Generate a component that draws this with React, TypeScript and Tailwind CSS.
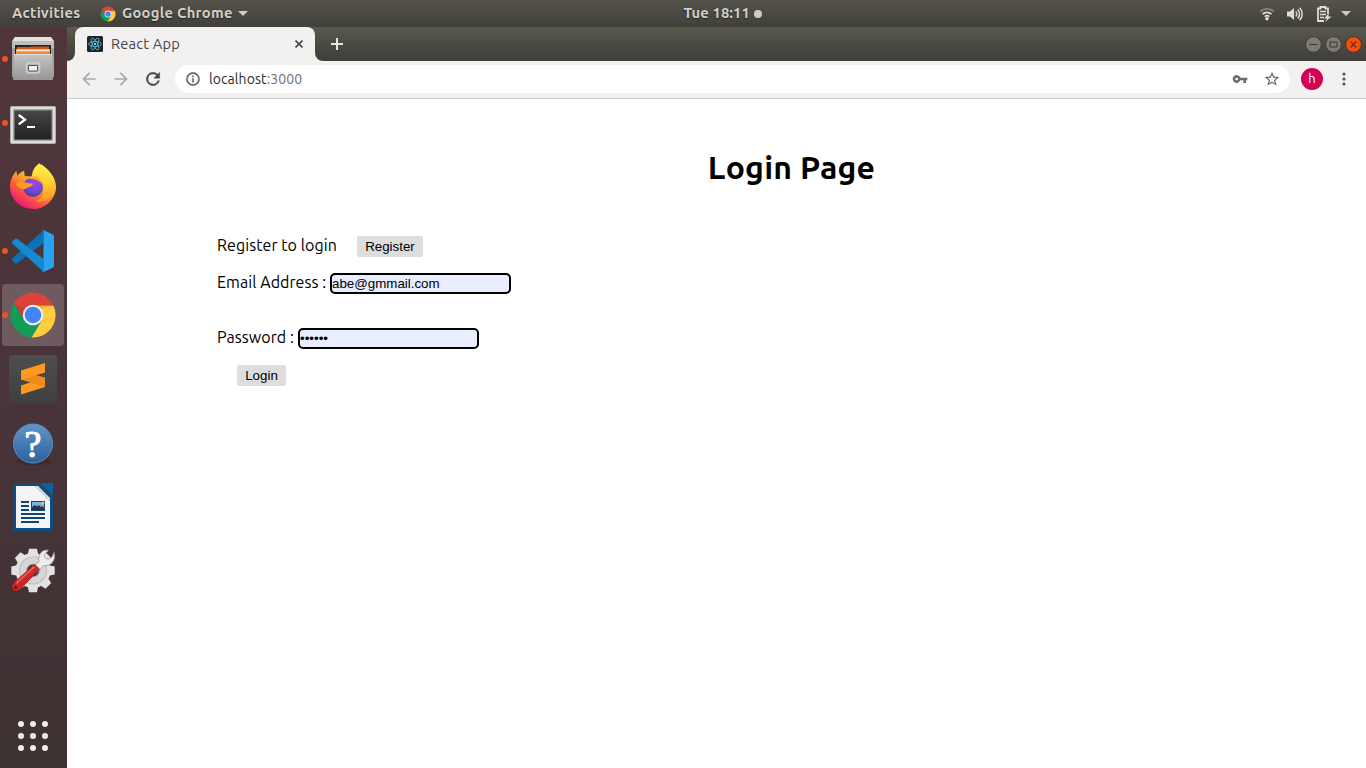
import type { ReactNode } from "react";

function ChromeLogo({ className }: { className: string }) {
  return (
    <svg viewBox="0 0 48 48" className={className}>
      <path d="M24 24 4.5 12.8A22.5 22.5 0 0 0 22.7 46.5L33.4 28Z" fill="#0f9d58" />
      <path d="M24 14.5H44.4A22.5 22.5 0 0 1 22.7 46.5L33 29Z" fill="#ffcd40" />
      <path d="M4.9 12.1A22.5 22.5 0 0 1 44.4 14.5H24L15 28Z" fill="#db4437" />
      <path d="M4.9 12.1 15 29 17 19Z" fill="#a8352a" opacity=".35" />
      <path d="M24 14H44.4L31 18.5Z" fill="#bf9b1a" opacity=".35" />
      <circle cx="24" cy="24" r="10.3" fill="#f1f1f1" />
      <circle cx="24" cy="24" r="8.3" fill="#4285f4" />
    </svg>
  );
}

function FilesIcon() {
  return (
    <svg viewBox="0 0 48 48" className="size-12">
      <defs>
        <linearGradient id="filesBody" x1="0" y1="0" x2="0" y2="1">
          <stop offset="0" stopColor="#c4c4c4" />
          <stop offset="1" stopColor="#969696" />
        </linearGradient>
      </defs>
      <path d="M6 2H42L45 6V42H3V6Z" fill="#a0a0a0" />
      <path d="M6 2H42L45 6.5H3Z" fill="#e2e2e2" />
      <path d="M3 6.5H45V13H3Z" fill="#bdbdbd" />
      <rect x="6" y="10" width="36" height="11" fill="#242424" />
      <path d="M8 12H21L22 11.5H40V20H8Z" fill="#d3561c" />
      <path d="M7 14H41V20H7Z" fill="#f3ad63" />
      <path d="M8 15.3H40" stroke="#fff0dc" strokeWidth="1" />
      <path d="M7 17H41V20H7Z" fill="#e88b3c" />
      <path d="M5 19H43L44 45H4Z" fill="url(#filesBody)" />
      <path d="M5 19.5H43" stroke="#e0e0e0" />
      <rect x="17.5" y="28" width="13" height="10" rx="2" fill="#b4b4b4" stroke="#cfcfcf" strokeWidth="1.500" />
      <rect x="19.5" y="30.5" width="9" height="5.500" rx=".5" fill="#f0f0f0" stroke="#555" />
    </svg>
  );
}

function TerminalIcon() {
  return (
    <svg viewBox="0 0 48 48" className="size-12">
      <defs>
        <linearGradient id="termScreen" x1="0" y1="0" x2="0" y2="1">
          <stop offset="0" stopColor="#484848" />
          <stop offset=".5" stopColor="#343434" />
          <stop offset="1" stopColor="#212121" />
        </linearGradient>
      </defs>
      <rect x="1.5" y="7.5" width="45" height="37" rx="1" fill="#dcdcdc" stroke="#b0b0b0" />
      <rect x="5" y="11" width="38" height="30" fill="url(#termScreen)" stroke="#858585" strokeWidth="1.200" />
      <path d="m9.700 16 6.300 4.700-6.300 4.700" fill="none" stroke="#fff" strokeWidth="2.300" />
      <path d="M18 28h8" stroke="#fff" strokeWidth="2" />
    </svg>
  );
}

function FirefoxIcon() {
  return (
    <svg viewBox="0 0 48 48" className="size-12">
      <defs>
        <linearGradient id="foxBody" x1=".85" y1=".1" x2=".3" y2=".95">
          <stop offset="0" stopColor="#fff44f" />
          <stop offset=".35" stopColor="#ffbd2d" />
          <stop offset=".68" stopColor="#ff6138" />
          <stop offset="1" stopColor="#f01c72" />
        </linearGradient>
        <linearGradient id="foxTail" x1=".4" y1="0" x2=".5" y2="1">
          <stop offset="0" stopColor="#fff04a" />
          <stop offset=".5" stopColor="#ffd232" />
          <stop offset="1" stopColor="#ff9228" />
        </linearGradient>
        <radialGradient id="foxGlobe" cx=".6" cy=".25" r=".8">
          <stop offset="0" stopColor="#a545ed" />
          <stop offset=".55" stopColor="#7249d6" />
          <stop offset="1" stopColor="#463bb0" />
        </radialGradient>
      </defs>
      <path d="M5.800 10c.6-1.200 1.500-2.200 1.500-2.200l1.200 5.100c1.100-1.800 3.300-4.100 6.600-5.200l.6 5.400 6.300.4 9.900-12.500c7.200 5.200 15.100 12.200 15.100 23.400A22.800 22.800 0 0 1 24 46 22.800 22.800 0 0 1 1 25c-.2-6.500 2-11.700 4.800-15Z" fill="url(#foxBody)" />
      <path d="M30.500 0c-5 3.500-7.500 8.500-7.500 13.500 3.500.2 9 2.500 11 7.500 2.800 7 0 14.500-7.500 17.500 8 1.500 17-3 20-11.500.5-4-.3-8.500-3-12l-.8-.4c-.6-3.500-2-4.200-2.700-4.600l-.3 2C36.500 8 31.500 6 30.500 0Z" fill="url(#foxTail)" />
      <circle cx="24" cy="24" r="10" fill="url(#foxGlobe)" />
      <path d="M6.800 20.800c3-2.500 7-2.300 10-1.300 2.200.8 4.800 1 7.200 1.200 0 2.500-4.500 3.200-6.200 4.300-1.300 1-1.800 1.500-3.300 1.300C11.500 26 8 23.500 6.800 20.800Z" fill="#ff9a23" />
      <path d="M18.500 15.500c3-2 7-2.800 11-1.500l-2.500.5c5 1.500 7.500 5 7.500 9-1-2.500-2.500-4-4.500-5-3-2.300-7-3-11.500-3Z" fill="#ffab2e" />
    </svg>
  );
}

function CodeIcon() {
  return (
    <svg viewBox="0 0 48 48" className="size-12">
      <path d="M34.500 3.200 3.300 31.500a1.400 1.400 0 0 0 0 2l3 2.700c.5.5 1.200.5 1.800.1L34.500 16Z" fill="#0d72b5" />
      <path d="M34.500 44.800 3.300 16.500a1.400 1.400 0 0 1 0-2l3-2.700c.5-.5 1.200-.5 1.800-.1L34.500 32Z" fill="#148ad0" />
      <path d="m34.500 3 9 4.200c1 .5 1.500 1.400 1.500 2.400v28.800c0 1-.6 2-1.500 2.400l-9 4.200c-.8.300-1.300-.1-1.800-.700.8.700 1.800.2 1.800-.8V4.500c0-1-1-1.500-1.800-.8.500-.6 1-1 1.800-.7Z" fill="#29a3ee" />
    </svg>
  );
}

function SublimeIcon() {
  return (
    <svg viewBox="0 0 48 48" className="size-12">
      <defs>
        <linearGradient id="sublimeTile" x1="0" y1="0" x2="0" y2="1">
          <stop offset="0" stopColor="#4d4d4d" />
          <stop offset="1" stopColor="#404040" />
        </linearGradient>
      </defs>
      <rect width="48" height="48" rx="2.500" fill="url(#sublimeTile)" />
      <path d="M36 22.500V32L12 39.500V30.500Z" fill="#ff9820" />
      <path d="M12 16 36 22.500V32L12 24.500Z" fill="#f28a17" />
      <path d="M36 8v9.500L12 24.800V15.500Z" fill="#ff9820" />
    </svg>
  );
}

function HelpIcon() {
  return (
    <svg viewBox="0 0 48 48" className="size-12">
      <defs>
        <linearGradient id="helpDisc" x1="0" y1="0" x2="0" y2="1">
          <stop offset="0" stopColor="#5f95c9" />
          <stop offset="1" stopColor="#2c629d" />
        </linearGradient>
      </defs>
      <ellipse cx="24" cy="42.500" rx="18" ry="4" fill="#2c2024" opacity=".35" />
      <circle cx="24" cy="24.500" r="19.500" fill="url(#helpDisc)" stroke="#5d8fbe" strokeWidth="1" />
      <text x="24" y="37.500" textAnchor="middle" fill="#fff" stroke="#fff" strokeWidth="1" className="font-['Liberation_Serif',serif] text-[38px]">?</text>
    </svg>
  );
}

function WriterIcon() {
  return (
    <svg viewBox="0 0 48 48" className="size-12">
      <path d="M6 0H30L44 15V46a2 2 0 0 1-2 2H6a2 2 0 0 1-2-2V2a2 2 0 0 1 2-2Z" fill="#0b4f7e" />
      <path d="M31 0H44V13Z" fill="#0a619f" />
      <path d="M7 3H26L41 18V45H7Z" fill="#f4f4f4" />
      <path d="M26 3 41 18V15L29 3Z" fill="#dbe1e6" />
      <path d="M12 19h8M12 23h8M12 27h8M12 31h24M12 35h24M12 39h18" stroke="#0b4771" strokeWidth="2" />
      <rect x="22" y="18" width="14" height="10" fill="#0b4771" />
      <rect x="23" y="19" width="12" height="8" fill="#74b7e6" />
      <circle cx="34" cy="20" r="1.500" fill="#f7c843" />
      <path d="M23 27v-3l3-2 2 1.500 2-1.500 1.500 2 1.500-1 2 2v2Z" fill="#333" />
    </svg>
  );
}

const teeth = [0, 45, 90, 135, 180, 225, 270, 315];

function SettingsIcon() {
  return (
    <svg viewBox="0 0 48 48" className="size-12">
      <g fill="#e2e2e2">
        {teeth.map((angle) => (
          <path key={angle} d="M18.500 9 20 1.800h8L29.500 9Z" transform={`rotate(${angle} 24 23.500)`} />
        ))}
        <circle cx="24" cy="23.500" r="17.500" />
      </g>
      <circle cx="24" cy="23.500" r="13.500" fill="#d6d6d6" stroke="#c0c0c0" strokeWidth="1.200" />
      <circle cx="24" cy="23.500" r="6.500" fill="#4a3a3d" stroke="#b5b5b5" />
      <path d="m23 21.500 7-7C28.500 7 33.500 2 39.500 3.200L35.500 7.500c-.3 2.500.8 4.500 3.500 4.500 2 0 3.500-1 4.500-3L45 5.500c2.500 7.500-3 14-10.500 13.200L27.500 25.500Z" fill="#ececec" stroke="#979797" strokeWidth=".8" />
      <path d="m25.500 17.500 5 4.500L11 42.500c-4 4.300-10.500-.3-7-6Z" fill="#cc2724" stroke="#8e1514" strokeWidth=".8" />
      <path d="M7 36.500 25.500 19.500" stroke="#e9594f" strokeWidth="2" />
      <circle cx="6.700" cy="40.300" r="1.500" fill="#5f1212" />
    </svg>
  );
}

function DockItem({ running, active, children }: { running?: boolean; active?: boolean; children: ReactNode }) {
  return (
    <div className="relative flex h-16 w-[66px] shrink-0 items-center justify-center">
      <div
        className={
          active
            ? "flex size-[62px] items-center justify-center rounded-[4px] bg-[#6f5a60]"
            : "flex size-[62px] items-center justify-center"
        }
      >
        {children}
      </div>
      {running && <span className="absolute top-[29px] left-[2px] size-[6px] rounded-full bg-[#e95420]" />}
    </div>
  );
}

function TopBar() {
  return (
    <header className="grid h-[27px] shrink-0 grid-cols-[1fr_auto_1fr] items-center bg-linear-to-b from-[#56534c] to-[#403f39] text-[14.667px] font-bold text-[#d3d0c9] [text-shadow:0_1px_1px_#222]">
      <div className="flex items-center pl-3">
        <span className="w-[88px] pb-0.5 whitespace-nowrap tracking-[0.32px]">Activities</span>
        <ChromeLogo className="size-4" />
        <span className="w-[120px] pb-0.5 pl-1.5 whitespace-nowrap tracking-[0.32px]">Google Chrome</span>
        <svg viewBox="0 0 10 5" className="ml-0.5 h-[5px] w-[10px]">
          <path d="M0 0H10L5 5Z" fill="#d0ccc4" />
        </svg>
      </div>
      <div className="flex items-center pl-[79px]">
        <span className="w-[70px] pb-0.5 whitespace-nowrap tracking-[0.15px]">Tue 18:11</span>
        <span className="size-2 rounded-full bg-[#cfccc6]" />
      </div>
      <div className="flex items-center justify-end pr-[15px]">
        <svg viewBox="0 0 16 16" className="size-4" fill="none" strokeWidth="1.800">
          <path d="M1.300 5.600a9.500 9.500 0 0 1 13.400 0" stroke="#88857e" />
          <path d="M3.600 8.200a6.300 6.300 0 0 1 8.800 0M5.700 10.700a3.300 3.300 0 0 1 4.600 0" stroke="#dfdbd2" />
          <circle cx="8" cy="12.800" r="1.800" fill="#dfdbd2" />
        </svg>
        <svg viewBox="0 0 16 16" className="ml-3 size-4" fill="none" stroke="#dfdbd2" strokeWidth="1.500">
          <path d="M0 5.500h3L7 2v12l-4-3.500H0Z" fill="#dfdbd2" stroke="none" />
          <path d="M8.700 5.500a3.500 3.500 0 0 1 0 5M10.700 3.500a6.400 6.400 0 0 1 0 9" />
          <path d="M12.700 1.800a9 9 0 0 1 0 12.400" />
        </svg>
        <svg viewBox="0 0 16 16" className="ml-[13px] size-4" fill="none" stroke="#dfdbd2">
          <path d="M8 15H2V2.500h2.500V1h5v1.500H12V8" strokeWidth="1.800" />
          <path d="M4 5.500h6M4 8.500h6M4 11.500h4" strokeWidth="1.500" />
          <path d="m12.500 7.500-4.500 5h3l-2 3.500 6.500-5.500h-3Z" fill="#dfdbd2" stroke="none" />
        </svg>
        <svg viewBox="0 0 10 5" className="ml-[9px] h-[5px] w-[10px]">
          <path d="M0 0H10L5 5Z" fill="#d0ccc4" />
        </svg>
      </div>
    </header>
  );
}

function Dock() {
  return (
    <nav className="flex w-[67px] shrink-0 flex-col bg-linear-to-b from-[#503639] via-[#49343a] to-[#3d3232]">
      <DockItem running><FilesIcon /></DockItem>
      <DockItem running><TerminalIcon /></DockItem>
      <DockItem><FirefoxIcon /></DockItem>
      <DockItem running><CodeIcon /></DockItem>
      <DockItem running active><ChromeLogo className="size-12" /></DockItem>
      <DockItem><SublimeIcon /></DockItem>
      <DockItem><HelpIcon /></DockItem>
      <DockItem><WriterIcon /></DockItem>
      <DockItem><SettingsIcon /></DockItem>
      <div className="mt-auto mb-[17px] ml-[18px] grid w-[30px] grid-cols-3 gap-1.5">
        {[0, 1, 2, 3, 4, 5, 6, 7, 8].map((dot) => (
          <span key={dot} className="size-1.5 rounded-full bg-[#eeeceb]" />
        ))}
      </div>
    </nav>
  );
}

function TabStrip() {
  return (
    <div className="flex h-[34px] bg-linear-to-b from-[#5a594c] to-[#3e3d38]">
      <div className="relative ml-2 flex w-[240px] items-center rounded-t-lg bg-[#f2f1f0] pl-3">
        <svg viewBox="0 0 8 8" className="absolute bottom-0 -left-2 size-2"><path d="M8 0V8H0A8 8 0 0 0 8 0Z" fill="#f2f1f0" /></svg>
        <svg viewBox="0 0 8 8" className="absolute -right-2 bottom-0 size-2"><path d="M0 0V8H8A8 8 0 0 1 0 0Z" fill="#f2f1f0" /></svg>
        <svg viewBox="0 0 16 16" className="size-4" fill="none" stroke="#58c4dc" strokeWidth=".8">
          <rect width="16" height="16" rx="1.500" fill="#20232a" stroke="none" />
          <ellipse cx="8" cy="8" rx="6.500" ry="2.500" />
          <ellipse cx="8" cy="8" rx="6.500" ry="2.500" transform="rotate(60 8 8)" />
          <ellipse cx="8" cy="8" rx="6.500" ry="2.500" transform="rotate(120 8 8)" />
          <circle cx="8" cy="8" r="1.200" fill="#61dafb" stroke="none" />
        </svg>
        <span className="ml-2 text-[14.667px] tracking-[0.2px] whitespace-nowrap text-[#45474a]">React App</span>
        <svg viewBox="0 0 8 8" className="mr-3 ml-auto size-2" stroke="#45474a" strokeWidth="1.600"><path d="m.5.5 7 7m0-7-7 7" /></svg>
      </div>
      <svg viewBox="0 0 12 12" className="mt-[11px] ml-4 size-3" stroke="#e8e6e1" strokeWidth="2"><path d="M6 0v12M0 6h12" /></svg>
      <div className="mr-1 ml-auto flex items-center gap-[3px]">
        <svg viewBox="0 0 17 17" className="size-[17px]" fill="none" stroke="#3a3934">
          <circle cx="8.500" cy="8.500" r="7.900" fill="#7d7b73" /><path d="M4.500 8.500h8" />
        </svg>
        <svg viewBox="0 0 17 17" className="size-[17px]" fill="none" stroke="#3a3934">
          <circle cx="8.500" cy="8.500" r="7.900" fill="#7d7b73" /><path d="M5 6h7v5H5Z" />
        </svg>
        <svg viewBox="0 0 17 17" className="size-[17px]" fill="none" stroke="#3a3934">
          <circle cx="8.500" cy="8.500" r="7.900" fill="#f54d0e" /><path d="m5.700 5.700 5.600 5.600m0-5.600-5.600 5.600" strokeWidth="1.200" />
        </svg>
      </div>
    </div>
  );
}

function Toolbar() {
  return (
    <div className="flex h-[38px] items-center border-b border-[#cccbca] bg-[#f2f1f0] pb-px pl-[14px]">
      <svg viewBox="0 0 24 24" className="-ml-0.5 size-5" fill="#aaa9a8"><path d="M20 11H7.830l5.590-5.590L12 4l-8 8 8 8 1.410-1.410L7.830 13H20v-2Z" /></svg>
      <svg viewBox="0 0 24 24" className="ml-3 size-5" fill="#aaa9a8"><path d="m12 4-1.410 1.410L16.170 11H4v2h12.170l-5.580 5.590L12 20l8-8-8-8Z" /></svg>
      <svg viewBox="0 0 24 24" className="ml-3 size-5" fill="#454749" stroke="#454749" strokeWidth=".5"><path d="M17.650 6.350A8 8 0 1 0 19.730 14h-2.080A6 6 0 1 1 12 6c1.660 0 3.140.69 4.220 1.780L13 11h7V4l-2.350 2.350Z" /></svg>
      <div className="ml-[12px] flex h-7 flex-1 items-center rounded-full bg-white pl-2.5">
        <svg viewBox="0 0 24 24" className="size-4" fill="#5f6368" stroke="#5f6368" strokeWidth=".5"><path d="M11 7h2v2h-2zm0 4h2v6h-2zm1-9a10 10 0 1 0 0 20 10 10 0 0 0 0-20Zm0 18a8 8 0 1 1 0-16 8 8 0 0 1 0 16Z" /></svg>
        <span className="ml-2 text-[14px] tracking-[0.08px] whitespace-nowrap text-[#2a2b2d]">localhost<span className="text-[#6c6f73]">:3000</span></span>
        <svg viewBox="0 0 24 24" className="ml-auto size-4" fill="#6d6e70"><path d="M12.650 10A6 6 0 1 0 12.650 14H17v4h4v-4h2v-4H12.650ZM7 14a2 2 0 1 1 0-4 2 2 0 0 1 0 4Z" /></svg>
        <svg viewBox="1 1 22 22" className="mr-2.5 ml-4 size-4" fill="#66686b"><path d="m22 9.240-7.190-.62L12 2 9.190 8.630 2 9.240l5.460 4.730L5.820 21 12 17.270 18.180 21l-1.630-7.030L22 9.240ZM12 15.400l-3.760 2.270 1-4.280-3.320-2.880 4.380-.38L12 6.100l1.710 4.040 4.380.38-3.320 2.880 1 4.280L12 15.400Z" /></svg>
      </div>
      <div className="ml-[11px] flex size-[22px] items-center justify-center rounded-full bg-[#d30055] text-[13px] text-white">h</div>
      <svg viewBox="0 0 4 14" className="mr-5 ml-[19px] h-[14px] w-1" fill="#55575a"><circle cx="2" cy="2" r="1.600" /><circle cx="2" cy="7" r="1.600" /><circle cx="2" cy="12" r="1.600" /></svg>
    </div>
  );
}

const buttonClass =
  "h-[21px] rounded-[2px] bg-[#dddddd] text-center font-['Liberation_Sans',sans-serif] text-[13.333px] leading-[21px] text-black";
const inputClass =
  "h-[21px] w-[181px] rounded-[5px] border-2 border-black bg-[#e8edff] p-0 font-['Liberation_Sans',sans-serif] text-[13.333px] leading-[17px] text-black outline-none";

function LoginPage() {
  return (
    <main className="flex-1 bg-white text-base leading-[21px] tracking-[0.07px] text-black">
      <h1 className="mt-12 mb-[49px] pl-[150px] text-center text-[32px] leading-10 font-bold tracking-[0.2px]">Login Page</h1>
      <form className="flex flex-col items-start pl-[150px]">
        <div className="flex h-[21px]">
          <span className="-mt-px w-[140px] whitespace-nowrap">Register to login</span>
          <button type="button" className={`${buttonClass} w-[66px] tracking-normal`}>Register</button>
        </div>
        <label className="mt-4 flex h-[21px]">
          <span className="-mt-px w-[113px] whitespace-nowrap">Email Address :</span>
          <input className={`${inputClass} tracking-normal`} type="text" defaultValue="abe@gmmail.com" />
        </label>
        <label className="mt-[34px] flex h-[21px]">
          <span className="-mt-px w-[81px] whitespace-nowrap">Password :</span>
          <input className={`${inputClass} tracking-normal`} type="password" defaultValue="secret" />
        </label>
        <button type="button" className={`${buttonClass} mt-4 ml-5 w-[49px] tracking-normal`}>Login</button>
      </form>
    </main>
  );
}

export default function App() {
  return (
    <div className="flex h-screen w-screen flex-col overflow-hidden font-['Ubuntu','Noto_Sans',sans-serif]">
      <TopBar />
      <div className="flex min-h-0 flex-1">
        <Dock />
        <div className="flex min-w-0 flex-1 flex-col">
          <TabStrip />
          <Toolbar />
          <LoginPage />
        </div>
      </div>
    </div>
  );
}
